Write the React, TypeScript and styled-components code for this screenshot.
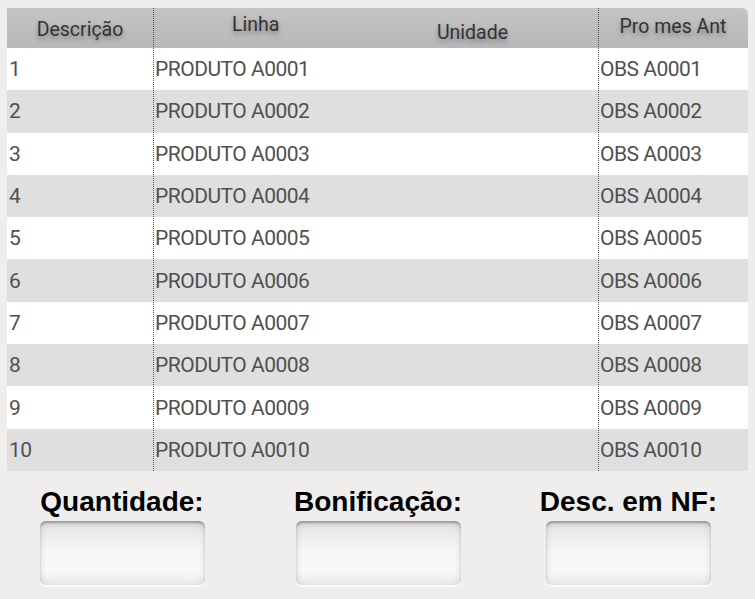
import styled, { createGlobalStyle } from 'styled-components'

const GlobalStyle = createGlobalStyle`
    html, body {
        margin: 0;
        padding: 0;
        background: #efeeed;
    }
`;

const Screen = styled.div`
    width: 755px;
    height: 599px;
    overflow: hidden;
    background: #efeeed;
    padding-top: 8px;
    box-sizing: border-box;
`;

const Table = styled.div`
    margin-left: 7px;
    width: 741px;
    position: relative;
`;

const cols = '146px 445px 150px';

const Header = styled.div`
    display: grid;
    grid-template-columns: ${cols};
    height: 40px;
    background: linear-gradient(#c4c4c4, #b8b8b8);
    border-top-right-radius: 6px;
    font-family: Roboto, "Liberation Sans", sans-serif;
    font-size: 19.5px;
    line-height: 23px;
    color: #333;
    text-shadow: 0 3px 5px rgba(0, 0, 0, 0.35);
`;

const HeadCell = styled.div<{ $top: number; $shift?: number }>`
    display: flex;
    justify-content: center;
    padding-top: ${p => p.$top}px;
    padding-left: ${p => p.$shift ?? 0}px;
    box-sizing: border-box;
`;

const MiddleHead = styled.div`
    display: flex;
    justify-content: space-between;
    padding: 0 90px 0 79px;
`;

const HeadLabel = styled.span<{ $top: number }>`
    padding-top: ${p => p.$top}px;
`;

const Row = styled.div<{ $odd: boolean }>`
    display: grid;
    grid-template-columns: ${cols};
    height: 42.3px;
    align-items: center;
    background: ${p => (p.$odd ? '#ffffff' : '#dfdfdf')};
`;

const Cell = styled.div`
    font-family: Roboto, "Liberation Sans", sans-serif;
    font-size: 21px;
    color: #505050;
    padding-left: 2px;
    white-space: nowrap;
    letter-spacing: -0.5px;
`;

const Divider = styled.div<{ $left: number }>`
    position: absolute;
    top: 0;
    bottom: 0;
    left: ${p => p.$left}px;
    border-left: 1px dotted #555;
`;

const Fields = styled.div`
    display: grid;
    grid-template-columns: 244px 268px 233px;
    margin-top: 17px;
`;

const Field = styled.div`
    display: flex;
    flex-direction: column;
    align-items: center;
    gap: 5px;
`;

const Label = styled.div`
    font-family: "Liberation Sans", Arial, sans-serif;
    font-weight: bold;
    font-size: 28px;
    line-height: 28px;
    color: #000;
    white-space: nowrap;
`;

const Box = styled.div`
    width: 165px;
    height: 64px;
    border-radius: 6px;
    box-sizing: border-box;
    background: linear-gradient(#cfcfcf 0%, #e9e9e9 14%, #f6f6f6 45%, #f8f8f8 80%, #e8e8e8 100%);
    box-shadow: inset 0 2px 2px rgba(0, 0, 0, 0.25), inset 6px 0 6px -4px rgba(0, 0, 0, 0.08),
        inset -6px 0 6px -4px rgba(0, 0, 0, 0.08), 0 2px 0 #fafafa;
`;

const rows = Array.from({ length: 10 }, (_, i) => i + 1);
const pad = (n: number) => String(n).padStart(4, '0');

const App = () => {
    return (
        <Screen>
            <GlobalStyle />
            <Table>
                <Header>
                    <HeadCell $top={10}>Descrição</HeadCell>
                    <MiddleHead>
                        <HeadLabel $top={5}>Linha</HeadLabel>
                        <HeadLabel $top={13}>Unidade</HeadLabel>
                    </MiddleHead>
                    <HeadCell $top={7} $shift={-8}>Pro mes Ant</HeadCell>
                </Header>
                {rows.map(n => (
                    <Row key={n} $odd={n % 2 === 1}>
                        <Cell>{n}</Cell>
                        <Cell>PRODUTO A{pad(n)}</Cell>
                        <Cell>OBS A{pad(n)}</Cell>
                    </Row>
                ))}
                <Divider $left={146} />
                <Divider $left={591} />
            </Table>
            <Fields>
                <Field>
                    <Label>Quantidade:</Label>
                    <Box />
                </Field>
                <Field>
                    <Label>Bonificação:</Label>
                    <Box />
                </Field>
                <Field>
                    <Label>Desc. em NF:</Label>
                    <Box />
                </Field>
            </Fields>
        </Screen>
    );
}

export default App;
